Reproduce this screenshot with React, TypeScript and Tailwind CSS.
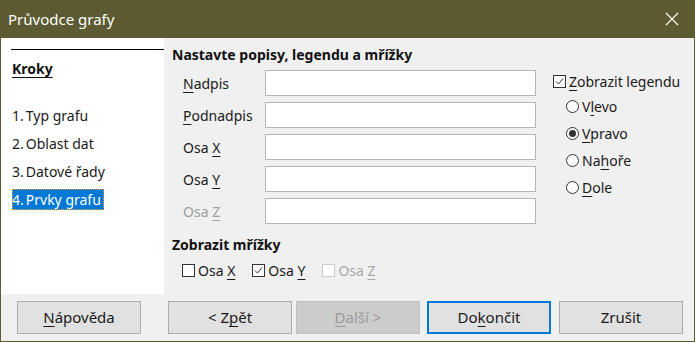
import React from 'react'

const font = { fontFamily: '"Noto Sans", "Open Sans", sans-serif' }

const Acc = ({ children }: { children: React.ReactNode }) => (
  <span className="underline underline-offset-[3px] decoration-1">{children}</span>
)

const Check = ({ checked, disabled }: { checked?: boolean; disabled?: boolean }) => (
  <span
    className={`inline-flex items-center justify-center w-[13px] h-[13px] border bg-white mr-[3px] ${
      disabled ? 'border-[#cccccc]' : 'border-[#333333]'
    }`}
  >
    {checked && (
      <svg width="9" height="9" viewBox="0 0 9 9">
        <path d="M1 4.5 L3.5 7 L8 1.5" fill="none" stroke="#333" strokeWidth="1" />
      </svg>
    )}
  </span>
)

const Radio = ({ checked }: { checked?: boolean }) => (
  <span className="inline-flex items-center justify-center w-[13px] h-[13px] rounded-full border border-[#333333] bg-white mr-[3px]">
    {checked && <span className="w-[7px] h-[7px] rounded-full bg-[#333333]" />}
  </span>
)

const Field = ({ label, disabled }: { label: React.ReactNode; disabled?: boolean }) => (
  <div className="flex items-center h-[26px]">
    <div className={`w-[93px] pl-[11px] ${disabled ? 'text-[#a0a0a0]' : 'text-[#1a1a1a]'}`}>{label}</div>
    <div className="w-[271px] h-[26px] bg-white border border-[#b4b4b4]" />
  </div>
)

const Btn = ({
  children,
  variant,
}: {
  children: React.ReactNode
  variant?: 'default' | 'disabled'
}) => (
  <div
    className={`w-[124px] h-[33px] flex items-center justify-center text-[15px] ${
      variant === 'disabled'
        ? 'bg-[#cccccc] border border-[#bfbfbf] text-[#9a9a9a]'
        : variant === 'default'
        ? 'bg-[#e1e1e1] border-2 border-[#0078d7] text-[#1a1a1a]'
        : 'bg-[#e1e1e1] border border-[#adadad] text-[#1a1a1a]'
    }`}
  >
    <span>{children}</span>
  </div>
)

const steps = ['Typ grafu', 'Oblast dat', 'Datové řady']

export default function App() {
  return (
    <div className="w-[695px] h-[342px] bg-[#5b5a30] px-px pb-px flex flex-col text-[14px]" style={font}>
      <div className="h-[38px] flex items-center justify-between pl-[7px] pr-[15px] text-white">
        <span className="text-[15px]">Průvodce grafy</span>
        <svg width="14" height="14" viewBox="0 0 14 14">
          <path d="M1 1 L13 13 M13 1 L1 13" stroke="white" strokeWidth="1.2" />
        </svg>
      </div>
      <div className="flex-1 bg-[#f0f0f0] flex flex-col">
        <div className="flex h-[256px]">
          <div className="w-[163px] bg-white pt-[11px]">
            <div className="ml-[10px] border-t border-black" />
            <div className="ml-[11px] mt-[8px] font-bold text-[#111] underline underline-offset-[3px]">Kroky</div>
            <div className="ml-[11px] mt-[22px] flex flex-col text-[#1a1a1a]">
              {steps.map((s, i) => (
                <div key={s} className="h-[28px] flex items-center">
                  <span>{i + 1}.</span>
                  <span className="ml-[2px]">{s}</span>
                </div>
              ))}
              <div className="h-[28px] flex items-center">
                <span className="bg-[#0078d7] text-white pr-[3px] outline-1 outline-dotted outline-[#f0a030] outline-offset-[-1px]">
                  4.<span className="ml-[2px]">Prvky grafu</span>
                </span>
              </div>
            </div>
          </div>
          <div className="flex-1 pl-[8px] pt-[7px] flex">
            <div className="w-[375px]">
              <div className="font-bold text-[#111] h-[20px] leading-[20px]">Nastavte popisy, legendu a mřížky</div>
              <div className="mt-[5px] flex flex-col gap-[6px]">
                <Field label={<><Acc>N</Acc>adpis</>} />
                <Field label={<><Acc>P</Acc>odnadpis</>} />
                <Field label={<>Osa <Acc>X</Acc></>} />
                <Field label={<>Osa <Acc>Y</Acc></>} />
                <Field label={<>Osa <Acc>Z</Acc></>} disabled />
              </div>
              <div className="mt-[11px] font-bold text-[#111] h-[20px] leading-[20px]">Zobrazit mřížky</div>
              <div className="mt-[5px] pl-[10px] flex items-center gap-[17px] text-[#1a1a1a]">
                <span className="flex items-center"><Check /><span>Osa <Acc>X</Acc></span></span>
                <span className="flex items-center"><Check checked /><span>Osa <Acc>Y</Acc></span></span>
                <span className="flex items-center text-[#a8a8a8]"><Check disabled /><span>Osa <Acc>Z</Acc></span></span>
              </div>
            </div>
            <div className="pl-[6px] pt-[24px] text-[#1a1a1a]">
              <div className="flex items-center h-[24px]"><Check checked /><span><Acc>Z</Acc>obrazit legendu</span></div>
              <div className="pl-[13px] flex flex-col">
                <div className="flex items-center h-[27px]"><Radio /><span>V<Acc>l</Acc>evo</span></div>
                <div className="flex items-center h-[27px]"><Radio checked /><span><Acc>V</Acc>pravo</span></div>
                <div className="flex items-center h-[27px]"><Radio /><span>Na<Acc>h</Acc>oře</span></div>
                <div className="flex items-center h-[26px]"><Radio /><span><Acc>D</Acc>ole</span></div>
              </div>
            </div>
          </div>
        </div>
        <div className="flex items-center pl-[16px] pt-[7px]">
          <Btn><Acc>N</Acc>ápověda</Btn>
          <div className="ml-[27px]"><Btn>&lt; Z<Acc>p</Acc>ět</Btn></div>
          <div className="ml-[4px]"><Btn variant="disabled"><Acc>D</Acc>alší &gt;</Btn></div>
          <div className="ml-[7px]"><Btn variant="default">Do<Acc>k</Acc>ončit</Btn></div>
          <div className="ml-[8px]"><Btn>Zrušit</Btn></div>
        </div>
      </div>
    </div>
  )
}
